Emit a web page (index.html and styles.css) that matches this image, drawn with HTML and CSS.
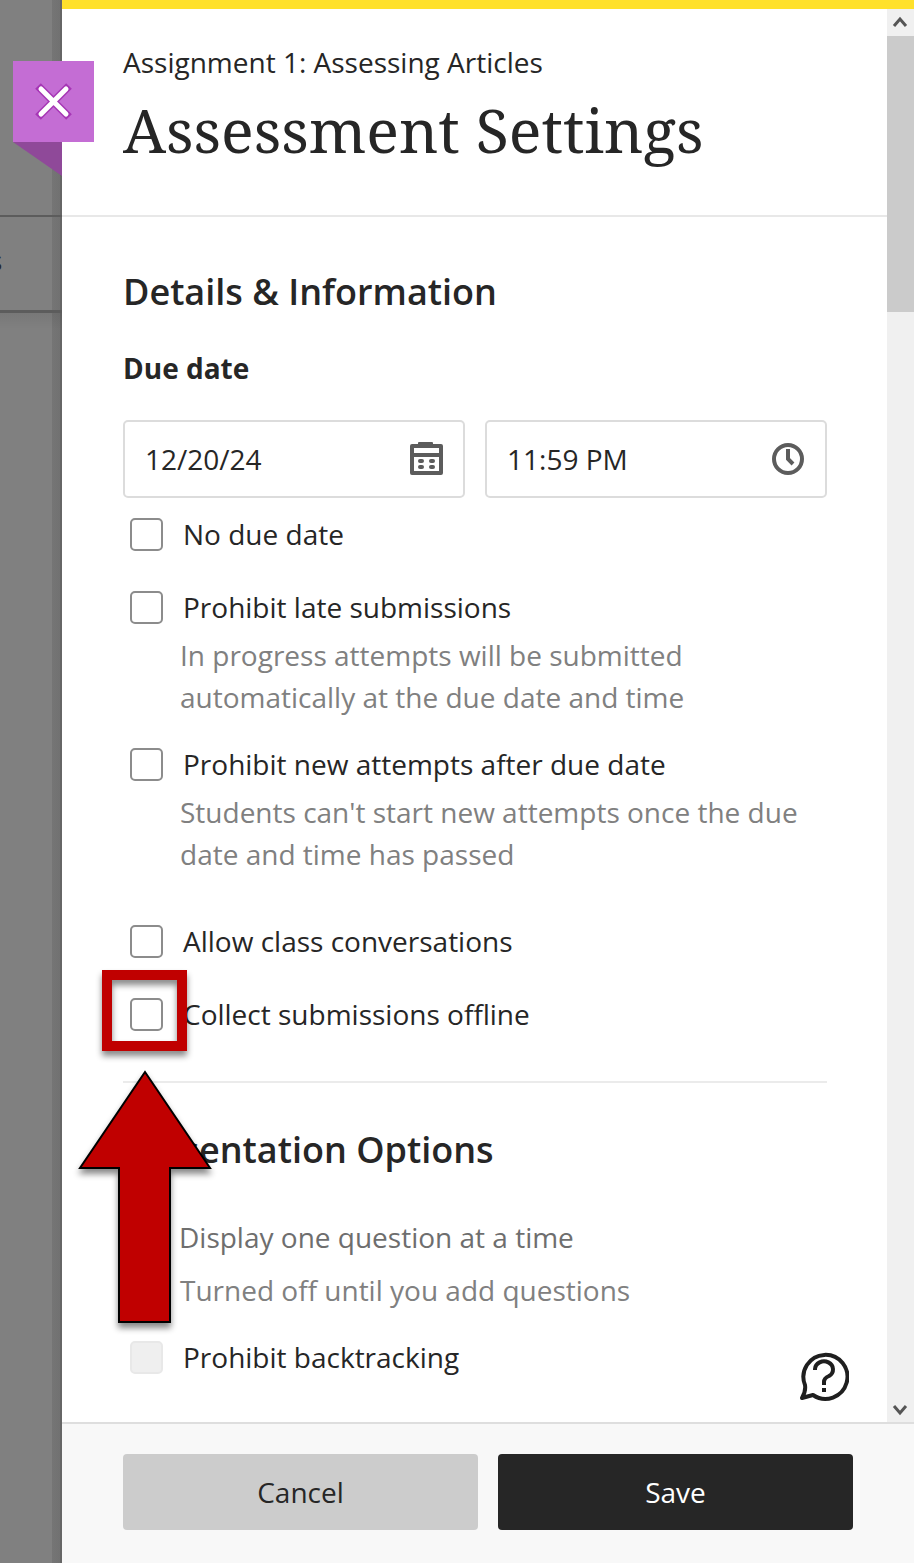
FILE: index.html
```html
<!DOCTYPE html>
<html lang="en">
<head>
<meta charset="utf-8">
<title>Assessment Settings</title>
<link rel="stylesheet" href="styles.css">
</head>
<body>
<div class="page">
  <div class="backdrop" aria-hidden="true">
    <div class="backdrop-top"></div>
    <div class="backdrop-tab"><span>s</span></div>
    <div class="backdrop-fade"></div>
  </div>
  <section class="panel" aria-labelledby="panel-title">
    <button class="close" type="button" aria-label="Close">
      <svg viewBox="0 0 40 40" width="40" height="40" fill="none" stroke-linecap="round">
        <path d="M4 4 35 35M35 4 4 35" stroke="#a636b5" stroke-width="8" stroke-linecap="butt"/>
        <path d="M7 7 32 32M32 7 7 32" stroke="#fff" stroke-width="5"/>
      </svg>
    </button>
    <form class="form">
      <div class="viewport">
        <div class="content">
          <header class="header">
            <p class="subtitle">Assignment 1: Assessing Articles</p>
            <h1 class="title" id="panel-title">Assessment Settings</h1>
          </header>
          <div class="sections">
            <section class="details">
              <h2 class="heading">Details &amp; Information</h2>
              <h3 class="label">Due date</h3>
              <div class="fields">
                <div class="field">
                  <input type="text" value="12/20/24" aria-label="Due date">
                  <svg viewBox="0 0 34 34" width="34" height="34" fill="#5c5c5c">
                    <path fill-rule="evenodd" d="M9 2V1q0-1 1-1h13q1 0 1 1v1h8q2 0 2 2v27q0 2-2 2H3q-2 0-2-2V4q0-2 2-2zM5 6v5h25V6zM5 15v14h25V15z"/>
                    <rect x="9" y="17" width="6" height="4" rx="2"/><rect x="20" y="17" width="6" height="4" rx="2"/>
                    <rect x="9" y="23" width="6" height="4" rx="2"/><rect x="20" y="23" width="6" height="4" rx="2"/>
                  </svg>
                </div>
                <div class="field">
                  <input type="text" value="11:59 PM" aria-label="Due time">
                  <svg viewBox="0 0 34 34" width="34" height="34" fill="none" stroke="#5c5c5c" stroke-width="4">
                    <circle cx="17" cy="17" r="14"/><path d="M17 7v10l5 5"/>
                  </svg>
                </div>
              </div>
              <div class="options">
                <label class="check"><input type="checkbox">No due date</label>
                <div class="option">
                  <label class="check"><input type="checkbox" aria-describedby="late-hint">Prohibit late submissions</label>
                  <p class="hint" id="late-hint">In progress attempts will be submitted automatically at the due date and time</p>
                </div>
                <div class="option">
                  <label class="check"><input type="checkbox" aria-describedby="new-hint">Prohibit new attempts after due date</label>
                  <p class="hint" id="new-hint">Students can't start new attempts once the due date and time has passed</p>
                </div>
              </div>
              <div class="options options-general">
                <label class="check"><input type="checkbox">Allow class conversations</label>
                <div class="marked">
                  <label class="check"><input type="checkbox">Collect submissions offline</label>
                  <div class="marker"></div>
                  <svg class="arrow" viewBox="0 0 134 256" width="134" height="256" aria-hidden="true">
                    <path d="M67 2 132 98H92V252H41V98H2z" fill="#c00000" stroke="#000" stroke-width="2"/>
                  </svg>
                </div>
              </div>
            </section>
            <section class="presentation">
              <h2 class="heading">Presentation Options</h2>
              <div class="display">
                <label class="check muted"><input type="checkbox" disabled>Display one question at a time</label>
                <p class="hint">Turned off until you add questions</p>
              </div>
              <label class="check"><input type="checkbox" disabled>Prohibit backtracking</label>
            </section>
          </div>
          <button class="help" type="button" aria-label="Help">
            <svg viewBox="0 0 50 50" width="50" height="50" fill="none" stroke="#1f1f1f" stroke-width="4" stroke-linejoin="round">
              <path d="M6 34A22 22 0 1 1 14 44L3 47Q7 40 6 34z"/>
              <path d="M16 19V18a9 8 0 1 1 14 7q-5 2-5 6v3" stroke-linecap="butt"/>
              <path d="M25 37v4"/>
            </svg>
          </button>
        </div>
        <div class="scrollbar" aria-hidden="true">
          <svg viewBox="0 0 27 27" width="27" height="27" fill="none" stroke="#555" stroke-width="3"><path d="M7 17 13 10 19 17"/></svg>
          <div class="thumb"></div>
          <svg class="down" viewBox="0 0 27 27" width="27" height="27" fill="none" stroke="#555" stroke-width="3"><path d="M7 11 13 18 19 11"/></svg>
        </div>
      </div>
      <footer class="footer">
        <button class="button" type="button">Cancel</button>
        <button class="button primary" type="submit">Save</button>
      </footer>
    </form>
  </section>
</div>
</body>
</html>
```
FILE: styles.css
```css
* { box-sizing: border-box; }
body {
  margin: 0;
  font: 28px/42px "Open Sans", "Noto Sans", sans-serif;
  color: #262626;
}
h1, h2, h3, p { margin: 0; }
button, input { font: inherit; color: inherit; }
svg { display: block; flex: none; }

.page { display: grid; grid-template-columns: 62px 1fr; min-height: 100vh; }

.backdrop {
  display: flex;
  flex-direction: column;
  overflow: hidden;
  background: linear-gradient(to left, #666 2px, #717171 2px, #757575 10px, transparent 10px) #808080;
}
.backdrop-top { height: 217px; border-bottom: 2px solid #5c5c5c; }
.backdrop-tab {
  display: flex;
  align-items: center;
  height: 96px;
  border-bottom: 3px solid #5c5c5c;
  font-size: 28px;
}
.backdrop-tab span { margin: -8px 0 0 -11px; }
.backdrop-fade { height: 16px; background: linear-gradient(#0001, transparent); }

.panel { position: relative; display: flex; min-width: 0; border-top: 9px solid #ffe12b; background: #fff; }
.form { flex: 1; display: flex; flex-direction: column; min-width: 0; }

.close {
  position: absolute;
  top: 52px;
  left: -49px;
  width: 81px;
  height: 81px;
  display: grid;
  place-items: center;
  padding: 0;
  border: 0;
  background: #c46dd4;
}
.close::after {
  content: "";
  position: absolute;
  top: 100%;
  left: 0;
  width: 49px;
  height: 34px;
  background: #8f4999;
  clip-path: polygon(0 0, 100% 0, 100% 100%);
}

.viewport { flex: 1; display: flex; }
.content { position: relative; flex: 1; min-width: 0; }
.header { padding: 32px 60px 46px 61px; border-bottom: 2px solid #e8e8e8; }
.title {
  margin-top: 8px;
  font: 400 61px/78px "Noto Serif", "Droid Serif", "DejaVu Serif Condensed", "DejaVu Serif", serif;
}

.sections { padding: 50px 60px 40px 61px; }
.heading { font-size: 36px; font-weight: 600; line-height: 50px; }
.label { margin-top: 30px; font-size: 28px; font-weight: 700; }

.fields { display: flex; gap: 20px; margin-top: 31px; }
.field {
  flex: 1;
  display: flex;
  align-items: center;
  min-width: 0;
  height: 78px;
  padding: 0 20px;
  border: 2px solid #dcdcdc;
  border-radius: 5px;
}
.field input { flex: 1; min-width: 0; padding: 0; border: 0; outline: 0; background: none; }

.options { display: flex; flex-direction: column; gap: 31px; margin-top: 15px; }
.option + .option { margin-top: -6px; }
.options-general { margin-top: 45px; }
.check { display: flex; align-items: center; gap: 20px; padding-left: 7px; }
.check input {
  appearance: none;
  flex: none;
  width: 33px;
  height: 33px;
  margin: 0;
  border: 2px solid #8c8c8c;
  border-radius: 5px;
  background: #fff;
}
.check input:disabled { border-color: #e8e8e8; background: #efefef; }
.check.muted { gap: 16px; color: #6e6e6e; }
.hint { margin-top: 6px; padding-left: 57px; color: #808080; }

.marked { position: relative; }
.marker {
  position: absolute;
  top: -23px;
  left: -21px;
  width: 85px;
  height: 81px;
  border: 10px solid #c00000;
  filter: drop-shadow(0 5px 3px #0007);
  pointer-events: none;
}
.arrow {
  position: absolute;
  top: 77px;
  left: -45px;
  z-index: 1;
  overflow: visible;
  filter: drop-shadow(0 5px 3px #0007);
  pointer-events: none;
}

.presentation { margin-top: 46px; padding-top: 42px; border-top: 2px solid #ebebeb; }
.display { margin: 41px 0 25px; }
.display .hint { margin-top: 11px; }

.help { position: absolute; right: 38px; bottom: 21px; padding: 0; border: 0; background: none; }

.scrollbar { display: flex; flex-direction: column; width: 27px; background: #f0f0f0; }
.thumb { height: 276px; background: #cbcbcb; }
.scrollbar .down { margin-top: auto; }

.footer {
  display: grid;
  grid-template-columns: 1fr 1fr;
  gap: 20px;
  padding: 30px 61px 33px;
  border-top: 2px solid #dedede;
  background: #f8f8f8;
}
.button { height: 76px; padding: 0; border: 0; border-radius: 4px; background: #ccc; }
.button.primary { background: #262626; color: #fff; }
```
